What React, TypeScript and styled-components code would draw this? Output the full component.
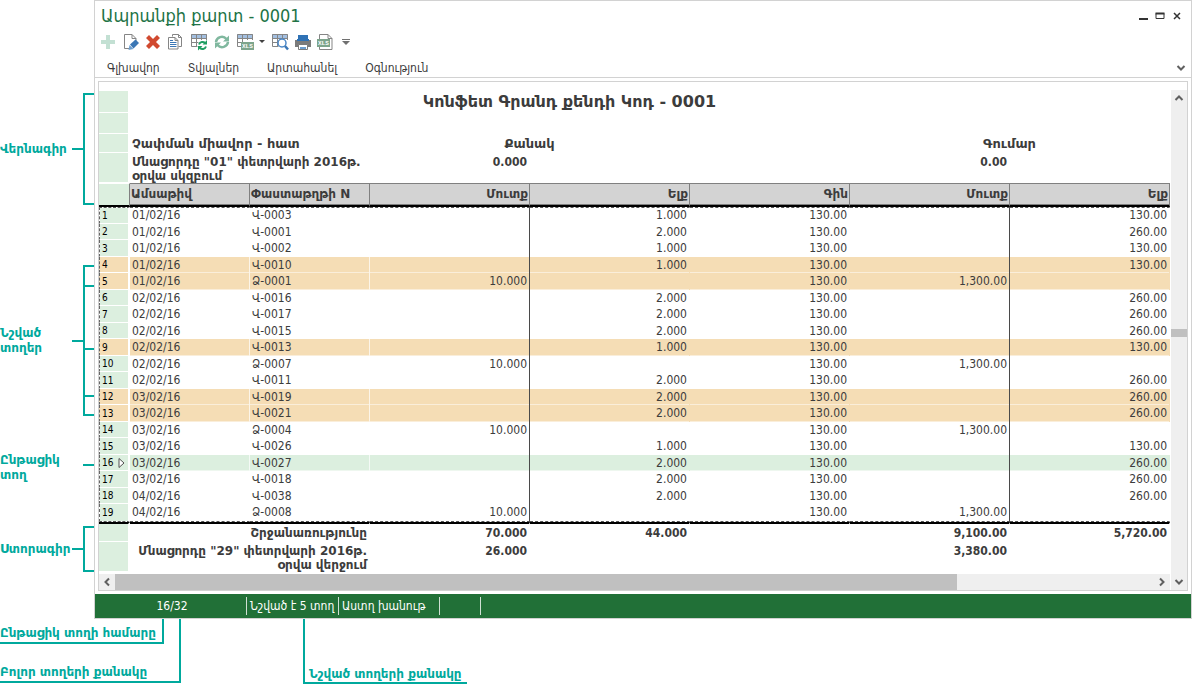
import React from 'react';
import styled, { createGlobalStyle, css } from 'styled-components';

const ui = '"DejaVu Sans Condensed", "DejaVu Sans", sans-serif';
const wide = '"DejaVu Sans", sans-serif';
const teal = '#00a99d';
const green = '#217037';
const mint = '#dcefdf';
const line = '#d2d2d2';

const Global = createGlobalStyle`
  * { box-sizing: border-box; }
  body { margin: 0; background: #fff; color: #3c3c3c; font-family: ${ui}; font-size: 12px; }
  button { font: inherit; color: inherit; background: none; border: 0; padding: 0; margin: 0; }
`;

const Page = styled.main`
  min-width: 900px;
`;

const Top = styled.div`
  display: flex;
  align-items: flex-start;
`;

/* ---- notes in the left margin ---- */

const Notes = styled.aside`
  flex: none;
  width: 94px;
  padding-top: 93px;
`;

const Note = styled.div<{ $gap?: number; $top?: boolean }>`
  display: flex;
  align-items: ${p => (p.$top ? 'flex-start' : 'center')};
  margin-top: ${p => p.$gap ?? 0}px;
`;

const NoteText = styled.span`
  flex: 1;
  color: ${teal};
  font-family: ${wide};
  font-size: 12px;
  font-weight: bold;
  line-height: 15px;
  white-space: nowrap;
`;

const Dash = styled.i<{ $drop?: number }>`
  flex: none;
  width: 11px;
  height: 2px;
  margin-top: ${p => p.$drop ?? 0}px;
  background: ${teal};
`;

const Bracket = styled.div`
  flex: none;
  width: 11px;
  border-left: 2px solid ${teal};
  border-top: 2px solid ${teal};
`;

const Step = styled.div<{ $h: number }>`
  height: ${p => p.$h}px;
  border-bottom: 2px solid ${teal};
`;

/* ---- window ---- */

const Window = styled.section`
  flex: 1;
  min-width: 0;
  border: 1px solid ${line};
`;

const TitleBar = styled.header`
  display: flex;
  align-items: center;
  height: 30px;
  padding: 0 6px;
`;

const Title = styled.h1`
  flex: 1;
  margin: 0;
  color: #217346;
  font-size: 18px;
  line-height: 30px;
  font-weight: normal;
`;

const WinButton = styled.button`
  width: 17px;
  height: 16px;
  display: grid;
  place-items: center;
`;

const Toolbar = styled.div`
  display: flex;
  align-items: center;
  height: 22px;
  padding-left: 3px;
`;

const Tool = styled.button<{ $w?: number }>`
  display: grid;
  place-items: center;
  width: ${p => p.$w ?? 23}px;
  height: 22px;
`;

const Menu = styled.nav`
  display: flex;
  align-items: center;
  gap: 28px;
  height: 25px;
  padding: 6px 5px 0 12px;
  border-bottom: 1px solid ${line};
`;

const MenuItem = styled.button`
  line-height: 16px;
`;

const Fold = styled.button`
  margin-left: auto;
  width: 11px;
  height: 16px;
  display: grid;
  place-items: center;
`;

const Frame = styled.div`
  display: flex;
  gap: 1px;
  margin: 3px 3px;
  padding-top: 8px;
  border: 1px solid ${line};
`;

const Sheet = styled.div`
  flex: 1;
  min-width: 0;
`;

/* ---- report table ---- */

const Report = styled.table`
  width: 100%;
  margin: 1px 0 2px;
  table-layout: fixed;
  border-collapse: separate;
  border-spacing: 0;
  line-height: 15px;
`;

const Row = styled.tr<{ $h: number; $fill?: string }>`
  height: ${p => p.$h}px;
  background: ${p => p.$fill ?? 'transparent'};
`;

const Cell = styled.td<{ $align?: 'left' | 'right' | 'center'; $bold?: boolean }>`
  padding: 0 2px;
  border-right: 1px solid transparent;
  text-align: ${p => p.$align ?? 'right'};
  font-weight: ${p => (p.$bold ? 'bold' : 'normal')};
  white-space: nowrap;
  vertical-align: middle;
`;

const Gutter = styled.th<{ $fill?: string }>`
  padding: 0 0 0 2px;
  text-align: left;
  font-size: 10px;
  font-weight: normal;
  color: #000;
  background: ${p => p.$fill ?? mint};
  background-clip: padding-box;
  border-right: 2px solid #fff;
  border-bottom: 1px solid #fff;
`;

const ReportTitle = styled(Cell)`
  font-family: ${wide};
  font-size: 16px;
  font-weight: bold;
  line-height: 20px;
`;

const GroupCell = styled(Cell)`
  font-family: ${wide};
  font-size: 13px;
  font-weight: bold;
`;

const BalanceCell = styled(Cell)`
  vertical-align: top;
  line-height: 14px;
  padding-top: 2px;
  font-weight: bold;
`;

const BalanceLabel = styled(BalanceCell)`
  font-family: ${wide};
`;

const TotalLabel = styled(Cell)`
  font-family: ${wide};
  font-weight: bold;
`;

const Heading = styled.th<{ $left?: boolean }>`
  padding: 0 1px;
  font-family: ${wide};
  text-align: ${p => (p.$left ? 'left' : 'right')};
  background: #d3d3d3;
  border-top: 1px solid #808080;
  border-right: 1px solid #808080;
  border-bottom: 2px solid #000;
  box-shadow: inset 0 -1px #808080;
  white-space: nowrap;
`;

const HeadGutter = styled(Gutter)`
  border-right: 1px solid #808080;
  border-top: 1px solid #fff;
  border-bottom: 2px solid #000;
`;

const Body = styled.tbody`
  td { padding-top: 1px; vertical-align: top; }
  th { border-left: 1px dashed #666; }
  tr:nth-child(even) { height: 16px; }
  tr:first-child > * { border-top: 1px dashed #555; padding-top: 0; }
  tr:last-child { height: 18px; }
  tr:last-child > * { border-bottom: 1px dashed #555; }
`;

const DataCell = styled(Cell)<{ $tint?: boolean; $rule?: boolean }>`
  ${p => p.$tint && css`box-shadow: inset 0 -1px rgba(255, 255, 255, 0.5);`}
  ${p => p.$tint && p.$align === 'left' && css`border-right-color: rgba(255, 255, 255, 0.7);`}
  ${p => p.$rule && css`border-right-color: #4a4a4a;`}
`;

const GutterInner = styled.span`
  display: flex;
  align-items: center;
  justify-content: space-between;
  padding-right: 3px;
  height: 14px;
`;

const Foot = styled.tfoot`
  tr:first-child > * { border-top: 2px solid #000; }
`;

/* ---- scroll bars and status ---- */

const HScroll = styled.div`
  display: flex;
  height: 16px;
  background: #efefef;
`;

const HTrack = styled.div`
  flex: 1;
`;

const HThumb = styled.div`
  width: 81%;
  height: 16px;
  background: #c0c0c0;
`;

const VScroll = styled.div`
  display: flex;
  flex-direction: column;
  width: 16px;
  background: #efefef;
`;

const VTrack = styled.div`
  flex: 1;
  display: flex;
  flex-direction: column;
`;

const VThumb = styled.div`
  height: 8px;
  background: #c0c0c0;
`;

const Spacer = styled.div<{ $grow: number }>`
  flex: ${p => p.$grow};
`;

const ScrollButton = styled.button`
  flex: none;
  display: grid;
  place-items: center;
  width: 16px;
  height: 16px;
`;

const Status = styled.footer`
  display: flex;
  align-items: center;
  height: 24px;
  background: ${green};
  color: #fff;
`;

const StatusItem = styled.span<{ $w: number; $center?: boolean }>`
  width: ${p => p.$w}px;
  height: 18px;
  padding-left: 3px;
  border-right: 1px solid #cfe0d3;
  line-height: 18px;
  text-align: ${p => (p.$center ? 'center' : 'left')};
  white-space: nowrap;
`;

/* ---- notes under the window ---- */

const Below = styled.div`
  display: flex;
  align-items: flex-start;
`;

const Outer = styled.div`
  width: 181px;
  height: 64px;
  border-right: 2px solid ${teal};
  border-bottom: 2px solid ${teal};
`;

const Inner = styled.div`
  width: 164px;
  height: 25px;
  padding-top: 7px;
  margin-bottom: 21px;
  border-right: 2px solid ${teal};
  border-bottom: 2px solid ${teal};
`;

const BelowText = styled.div`
  color: ${teal};
  font-family: ${wide};
  font-weight: bold;
  line-height: 15px;
  white-space: nowrap;
`;

const Marked = styled.div`
  width: 164px;
  height: 65px;
  margin-left: 122px;
  padding: 48px 0 0 4px;
  border-left: 2px solid ${teal};
  border-bottom: 2px solid ${teal};
`;

/* ---- drawings ---- */

const Icon = ({ w = 18, h = 18, children }: { w?: number; h?: number; children: React.ReactNode }) => (
  <svg width={w} height={h} viewBox={`0 0 ${w} ${h}`} aria-hidden="true">{children}</svg>
);

const Chevron = ({ d }: { d: string }) => (
  <Icon w={10} h={10}><path d={d} fill="none" stroke="#606060" strokeWidth="2" /></Icon>
);
const UP = 'M1.5 7 L5 3.5 L8.5 7';
const DOWN = 'M1.5 3 L5 6.5 L8.5 3';
const LEFT = 'M7 1.5 L3.5 5 L7 8.5';
const RIGHT = 'M3 1.5 L6.5 5 L3 8.5';

const Grid = () => (
  <>
    <path d="M1 1h16v4h-16z" fill="#a3bfe0" />
    <path d="M1.5 1.5h15v4h-15zM6.5 1v13M11.5 1v6M1.5 5v8.500h6M1.500 9.500h7M16.500 5v2" fill="none" stroke="#858585" />
  </>
);

const Badge = ({ x, y }: { x: number; y: number }) => (
  <>
    <rect x={x} y={y} width="13" height="8" fill="#7da58c" />
    <text x={x + 1} y={y + 6} fontSize="6" fontWeight="bold" fontFamily="Liberation Mono, monospace" fill="#fff">XLS</text>
  </>
);

const icons = {
  add: <Icon><path d="M7 2h4v5h5v4h-5v5h-4v-5h-5v-4h5z" fill="#c3e0d3" /></Icon>,
  edit: (
    <Icon>
      <path d="M8 15.500H2.500V1.500H10l4 4V8M10 1.500v4h4" fill="none" stroke="#858585" />
      <path d="M6.500 17l1-5 4 4z" fill="#6d9fd0" />
      <path d="M8 11.500l5.500-5 3.500 3.500-5.500 5.500z" fill="#3b77b5" />
    </Icon>
  ),
  remove: <Icon><path d="M2 5l3-3 4 4 4-4 3 3-4 4 4 4-3 3-4-4-4 4-3-3 4-4z" fill="#d14a30" /></Icon>,
  copy: (
    <Icon>
      <path d="M6.500 3.500v-2h6l3 3v9h-3M12.500 1.500v3h3" fill="none" stroke="#858585" />
      <path d="M2.500 4.500h6.500l3 3v8.500h-9.500zM9 4.500v3h3" fill="#fff" stroke="#858585" />
      <path d="M4 7.500h3M4 9.500h6.500M4 11.500h6.500M4 13.500h6.500" stroke="#3b77b5" />
    </Icon>
  ),
  reload: (
    <Icon>
      <Grid />
      <path d="M9 11.500c1-3 4.500-3 6-1.500M16 13.500c-1 3-4.500 3-6 1.500" fill="none" stroke="#1f9e62" strokeWidth="2" />
      <path d="M17 7v4.500h-4.500zM8 17.500v-4.500h4.500z" fill="#1f9e62" />
    </Icon>
  ),
  refresh: (
    <Icon>
      <path d="M3 9c.500-5 7-7 10.500-3M15 9c-.5 5-7 7-10.500 3" fill="none" stroke="#80b89f" strokeWidth="2.500" />
      <path d="M16 2.500v6h-6zM2 15.500v-6h6z" fill="#80b89f" />
    </Icon>
  ),
  exportGrid: <Icon><Grid /><Badge x={5} y={9} /></Icon>,
  find: (
    <Icon>
      <Grid />
      <circle cx="11" cy="10" r="4" fill="#fff" stroke="#4a87c7" strokeWidth="1.500" />
      <path d="M14 13l3 3.500" stroke="#3b77b5" strokeWidth="2.500" />
    </Icon>
  ),
  print: (
    <Icon>
      <path d="M4 2h10v4h-10z" fill="#2f72b5" />
      <path d="M1 7h2v1h12v-1h2v7h-3v-2H4v2H1z" fill="#7b7b7b" />
      <path d="M3 6h12v2H3z" fill="#2f72b5" />
      <path d="M4.500 11.500h9v5h-9z" fill="#fff" stroke="#7b7b7b" />
      <path d="M6 15h6" stroke="#6d9fd0" strokeWidth="2" />
    </Icon>
  ),
  exportDoc: (
    <Icon>
      <path d="M3.500 6V1.500H12l4 4v11H3.500V14M12 1.500v4h4" fill="none" stroke="#858585" />
      <Badge x={1} y={6} />
    </Icon>
  ),
  caret: <Icon w={6} h={4}><path d="M0 0h6l-3 3z" fill="#404040" /></Icon>,
  more: <Icon w={8} h={8}><path d="M0 1.500h8" stroke="#707070" /><path d="M0 3h8l-4 4z" fill="#707070" /></Icon>,
};

const tools: { label: string; icon: React.ReactNode; w?: number }[] = [
  { label: 'Ավելացնել', icon: icons.add, w: 19 },
  { label: 'Խմբագրել', icon: icons.edit, w: 27 },
  { label: 'Հեռացնել', icon: icons.remove, w: 18 },
  { label: 'Պատճենել', icon: icons.copy, w: 25 },
  { label: 'Վերահաշվարկել', icon: icons.reload },
  { label: 'Թարմացնել', icon: icons.refresh },
  { label: 'Արտահանել աղյուսակը', icon: icons.exportGrid },
  { label: 'Արտահանման տեսակներ', icon: icons.caret, w: 11 },
  { label: 'Որոնել', icon: icons.find, w: 25 },
  { label: 'Տպել', icon: icons.print, w: 21 },
  { label: 'Արտահանել', icon: icons.exportDoc },
  { label: 'Այլ', icon: icons.more, w: 19 },
];

/* ---- data ---- */

type Entry = { date: string; doc: string; qtyIn?: string; qtyOut?: string; sumIn?: string; sumOut?: string; mark?: boolean; current?: boolean };

const out = (date: string, doc: string, n: 1 | 2, extra: Partial<Entry> = {}): Entry => ({
  date, doc, qtyOut: `${n}.000`, sumOut: n === 1 ? '130.00' : '260.00', ...extra,
});
const inc = (date: string, doc: string, extra: Partial<Entry> = {}): Entry => ({
  date, doc, qtyIn: '10.000', sumIn: '1,300.00', ...extra,
});

const entries: Entry[] = [
  out('01/02/16', 'Վ-0003', 1),
  out('01/02/16', 'Վ-0001', 2),
  out('01/02/16', 'Վ-0002', 1),
  out('01/02/16', 'Վ-0010', 1, { mark: true }),
  inc('01/02/16', 'Ձ-0001', { mark: true }),
  out('02/02/16', 'Վ-0016', 2),
  out('02/02/16', 'Վ-0017', 2),
  out('02/02/16', 'Վ-0015', 2),
  out('02/02/16', 'Վ-0013', 1, { mark: true }),
  inc('02/02/16', 'Ձ-0007'),
  out('02/02/16', 'Վ-0011', 2),
  out('03/02/16', 'Վ-0019', 2, { mark: true }),
  out('03/02/16', 'Վ-0021', 2, { mark: true }),
  inc('03/02/16', 'Ձ-0004'),
  out('03/02/16', 'Վ-0026', 1),
  out('03/02/16', 'Վ-0027', 2, { current: true }),
  out('03/02/16', 'Վ-0018', 2),
  out('04/02/16', 'Վ-0038', 2),
  inc('04/02/16', 'Ձ-0008'),
];

const menu = ['Գլխավոր', 'Տվյալներ', 'Արտահանել', 'Օգնություն'];

const DataRow = ({ e, n }: { e: Entry; n: number }) => {
  const fill = e.mark ? '#f5ddb5' : e.current ? mint : undefined;
  const tint = Boolean(fill);
  return (
    <Row $h={17} $fill={fill}>
      <Gutter scope="row" $fill={fill}>
        <GutterInner>
          {n}
          {e.current && <Icon w={7} h={12}><path d="M1 1.500v9l5-4.500z" fill="#fff" stroke="#505050" /></Icon>}
        </GutterInner>
      </Gutter>
      <DataCell $align="left" $tint={tint}>{e.date}</DataCell>
      <DataCell $align="left" $tint={tint}>{e.doc}</DataCell>
      <DataCell $tint={tint} $rule>{e.qtyIn}</DataCell>
      <DataCell $tint={tint}>{e.qtyOut}</DataCell>
      <DataCell $tint={tint}>130.00</DataCell>
      <DataCell $tint={tint} $rule>{e.sumIn}</DataCell>
      <DataCell $tint={tint}>{e.sumOut}</DataCell>
    </Row>
  );
};

export default function App() {
  return (
    <Page>
      <Global />
      <Top>
        <Notes>
          <Note>
            <NoteText>Վերնագիր</NoteText>
            <Dash />
            <Bracket><Step $h={110} /></Bracket>
          </Note>
          <Note $gap={60}>
            <NoteText>Նշված<br />տողեր</NoteText>
            <Dash />
            <Bracket><Step $h={20} /><Step $h={63} /><Step $h={47} /><Step $h={19} /></Bracket>
          </Note>
          <Note $gap={37} $top>
            <NoteText>Ընթացիկ<br />տող</NoteText>
            <Dash $drop={11} />
          </Note>
          <Note $gap={43}>
            <NoteText>Ստորագիր</NoteText>
            <Dash />
            <Bracket><Step $h={44} /></Bracket>
          </Note>
        </Notes>

        <Window>
          <TitleBar>
            <Title>Ապրանքի քարտ - 0001</Title>
            <WinButton aria-label="Ծալել"><Icon w={10} h={10}><path d="M1 8h9" stroke="#333" strokeWidth="2" /></Icon></WinButton>
            <WinButton aria-label="Ծավալել"><Icon w={10} h={10}><path d="M1 2.500h8v5h-8z" fill="none" stroke="#333" /><path d="M.5 2.500h9" stroke="#333" strokeWidth="2" /></Icon></WinButton>
            <WinButton aria-label="Փակել"><Icon w={10} h={10}><path d="M2 2l6 6M8 2l-6 6" stroke="#333" strokeWidth="1.500" /></Icon></WinButton>
          </TitleBar>
          <Toolbar>
            {tools.map(t => <Tool key={t.label} $w={t.w} aria-label={t.label}>{t.icon}</Tool>)}
          </Toolbar>
          <Menu>
            {menu.map(m => <MenuItem key={m}>{m}</MenuItem>)}
            <Fold aria-label="Ծալել գոտին"><Chevron d={DOWN} /></Fold>
          </Menu>

          <Frame>
            <Sheet>
              <Report>
                <colgroup>
                  <col style={{ width: 31 }} />
                  <col style={{ width: 120 }} />
                  <col style={{ width: 120 }} />
                  <col /><col /><col /><col /><col />
                </colgroup>
                <thead>
                  <Row $h={22}>
                    <Gutter />
                    <ReportTitle as="th" colSpan={6} $align="center">Կոնֆետ Գրանդ քենդի Կոդ - 0001</ReportTitle>
                    <Cell />
                  </Row>
                  <Row $h={21}><Gutter /><Cell colSpan={7} /></Row>
                  <Row $h={19}>
                    <Gutter />
                    <GroupCell colSpan={2} $align="left">Չափման միավոր - հատ</GroupCell>
                    <GroupCell colSpan={2} $align="center">Քանակ</GroupCell>
                    <Cell />
                    <GroupCell colSpan={2} $align="center">Գումար</GroupCell>
                  </Row>
                  <Row $h={30}>
                    <Gutter />
                    <BalanceLabel colSpan={2} $align="left">Մնացորդը "01" փետրվարի 2016թ.<br />օրվա սկզբում</BalanceLabel>
                    <BalanceCell>0.000</BalanceCell>
                    <Cell colSpan={2} />
                    <BalanceCell>0.00</BalanceCell>
                    <Cell />
                  </Row>
                  <Row $h={24}>
                    <HeadGutter />
                    <Heading $left>Ամսաթիվ</Heading>
                    <Heading $left>Փաստաթղթի N</Heading>
                    <Heading>Մուտք</Heading>
                    <Heading>Ելք</Heading>
                    <Heading>Գին</Heading>
                    <Heading>Մուտք</Heading>
                    <Heading>Ելք</Heading>
                  </Row>
                </thead>
                <Body>
                  {entries.map((e, i) => <DataRow key={e.doc} e={e} n={i + 1} />)}
                </Body>
                <Foot>
                  <Row $h={20}>
                    <Gutter />
                    <TotalLabel colSpan={2}>Շրջանառությունը</TotalLabel>
                    <Cell $bold>70.000</Cell>
                    <Cell $bold>44.000</Cell>
                    <Cell />
                    <Cell $bold>9,100.00</Cell>
                    <Cell $bold>5,720.00</Cell>
                  </Row>
                  <Row $h={30}>
                    <Gutter />
                    <BalanceLabel colSpan={2}>Մնացորդը "29" փետրվարի 2016թ.<br />օրվա վերջում</BalanceLabel>
                    <BalanceCell>26.000</BalanceCell>
                    <Cell colSpan={2} />
                    <BalanceCell>3,380.00</BalanceCell>
                    <Cell />
                  </Row>
                </Foot>
              </Report>
              <HScroll>
                <ScrollButton aria-label="Ձախ"><Chevron d={LEFT} /></ScrollButton>
                <HTrack><HThumb /></HTrack>
                <ScrollButton aria-label="Աջ"><Chevron d={RIGHT} /></ScrollButton>
              </HScroll>
            </Sheet>
            <VScroll>
              <ScrollButton aria-label="Վեր"><Chevron d={UP} /></ScrollButton>
              <VTrack><Spacer $grow={223} /><VThumb /><Spacer $grow={237} /></VTrack>
              <ScrollButton aria-label="Վար"><Chevron d={DOWN} /></ScrollButton>
            </VScroll>
          </Frame>

          <Status>
            <StatusItem $w={152} $center>16/32</StatusItem>
            <StatusItem $w={92}>Նշված է 5 տող</StatusItem>
            <StatusItem $w={101}>Աստղ խանութ</StatusItem>
            <StatusItem $w={41} />
          </Status>
        </Window>
      </Top>

      <Below>
        <Outer>
          <Inner><BelowText>Ընթացիկ տողի համարը</BelowText></Inner>
          <BelowText>Բոլոր տողերի քանակը</BelowText>
        </Outer>
        <Marked><BelowText>Նշված տողերի քանակը</BelowText></Marked>
      </Below>
    </Page>
  );
}
